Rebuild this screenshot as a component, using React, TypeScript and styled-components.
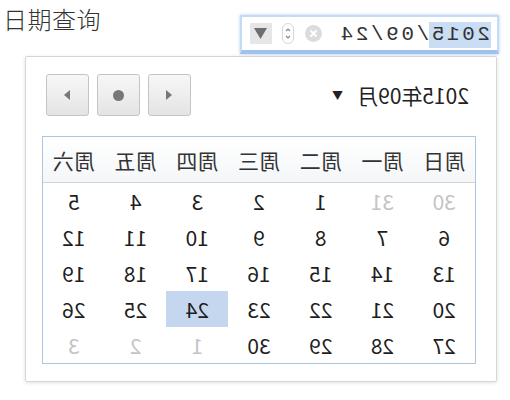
import styled, { createGlobalStyle } from "styled-components";

const GlobalStyle = createGlobalStyle`
  body {
    margin: 0;
    background: #ffffff;
    font-family: "Noto Sans CJK SC", "Noto Sans", sans-serif;
    color: #222;
  }
`

const Page = styled.main`
  width: 510px;
  height: 400px;
  box-sizing: border-box;
  padding: 3px 11px 0 3px;
  overflow: hidden;
`

const TopRow = styled.div`
  display: flex;
  flex-direction: row;
  justify-content: space-between;
  align-items: flex-start;
`

const Title = styled.h1`
  margin: 0;
  font-size: 24px;
  line-height: 32px;
  font-weight: 300;
  color: #333;
  letter-spacing: 0.5px;
`

// the whole control is shown mirrored in the picture
const DateInput = styled.div`
  margin-top: 12px;
  width: 259px;
  height: 39px;
  box-sizing: border-box;
  display: flex;
  flex-direction: row;
  align-items: center;
  padding-left: 6px;
  padding-right: 8px;
  background: #fff;
  border: 2px solid #c4dbf4;
  border-bottom: 4px solid #9fc2ea;
  box-shadow: 0 0 3px rgba(120, 170, 230, 0.6);
  transform: scaleX(-1);
`

const DateText = styled.div`
  font-family: "Liberation Mono", "DejaVu Sans Mono", monospace;
  font-size: 21px;
  letter-spacing: 2.6px;
  color: #333;
  display: flex;
  align-items: center;
  height: 26px;
  margin-top: 2px;
`

const Selected = styled.span`
  background: #c9ddf4;
  height: 26px;
  line-height: 26px;
  padding-left: 1px;
`

const Spacer = styled.div`
  flex: 1;
`

const IconBox = styled.span<{ $gap?: number }>`
  display: flex;
  align-items: center;
  margin-left: ${(p) => p.$gap ?? 0}px;
`

const DropButton = styled.span`
  margin-left: 10px;
  width: 22px;
  height: 21px;
  background: #e6e6e6;
  display: flex;
  align-items: center;
  justify-content: center;
`

const Popup = styled.section`
  margin-top: 2px;
  margin-left: 22px;
  width: 472px;
  height: 326px;
  box-sizing: border-box;
  padding: 17px 20px 0 20px;
  border: 1px solid #d6d6d6;
  border-radius: 2px;
  box-shadow: 0 1px 4px rgba(0, 0, 0, 0.12);
  transform: scaleX(-1);
`

const PopupHeader = styled.div`
  display: flex;
  flex-direction: row;
  justify-content: space-between;
  align-items: center;
  height: 42px;
  margin-bottom: 20px;
`

const MonthLabel = styled.div`
  padding-left: 7px;
  font-size: 21px;
  color: #222;
  display: flex;
  align-items: center;
  gap: 14px;
`

const Caret = styled.span`
  font-size: 11px;
  color: #222;
`

const NavGroup = styled.div`
  display: flex;
  gap: 8px;
`

const NavButton = styled.button`
  width: 43px;
  height: 42px;
  box-sizing: border-box;
  border: 1px solid #c4c4c4;
  border-radius: 3px;
  background: linear-gradient(#f7f7f7, #e4e4e4);
  display: flex;
  align-items: center;
  justify-content: center;
  padding: 0;
`

const Dot = styled.span`
  width: 11px;
  height: 11px;
  border-radius: 50%;
  background: #777;
`

const Table = styled.div`
  width: 432px;
  border: 1px solid #a9c7de;
  display: grid;
  grid-template-columns: repeat(7, 1fr);
  grid-template-rows: 46px repeat(5, 36px);
`

const HeadCell = styled.div`
  display: flex;
  align-items: center;
  justify-content: center;
  font-size: 21px;
  color: #333;
  background: linear-gradient(#ffffff, #f4f6f8);
  border-bottom: 1px solid #cfd4d8;
`

const DayCell = styled.div<{ $muted?: boolean; $active?: boolean }>`
  display: flex;
  align-items: center;
  justify-content: center;
  font-size: 21px;
  color: ${(p) => (p.$muted ? "#c4c4c4" : "#1e1e1e")};
  background: ${(p) => (p.$active ? "#c5d7ef" : "transparent")};
`

const weekdays = ["周日", "周一", "周二", "周三", "周四", "周五", "周六"];

const days: { d: number; muted?: boolean }[] = [
  { d: 30, muted: true },
  { d: 31, muted: true },
  ...Array.from({ length: 30 }, (_, i) => ({ d: i + 1 })),
  { d: 1, muted: true },
  { d: 2, muted: true },
  { d: 3, muted: true },
];

const Triangle = ({ dir }: { dir: "left" | "right" }) => (
  <svg width="8" height="10" viewBox="0 0 8 10">
    {dir === "left" ? (
      <path d="M7 0 L1 5 L7 10 Z" fill="#777" />
    ) : (
      <path d="M1 0 L7 5 L1 10 Z" fill="#777" />
    )}
  </svg>
);

const ClearIcon = () => (
  <svg width="17" height="17" viewBox="0 0 17 17">
    <circle cx="8.5" cy="8.5" r="8.5" fill="#dcdcdc" />
    <path d="M5.5 5.5 L11.5 11.5 M11.5 5.5 L5.5 11.5" stroke="#fff" strokeWidth="2" />
  </svg>
);

const SpinIcon = () => (
  <svg width="12" height="21" viewBox="0 0 12 21">
    <rect x="0.5" y="0.5" width="11" height="20" rx="5.5" fill="#fff" stroke="#d6d6d6" />
    <path d="M4 8 L6 6 L8 8 M4 13 L6 15 L8 13" stroke="#888" strokeWidth="1.2" fill="none" />
  </svg>
);

const DropIcon = () => (
  <svg width="13" height="11" viewBox="0 0 13 11">
    <path d="M0 0 L13 0 L6.5 11 Z" fill="#6e6e6e" />
  </svg>
);

const App = () => {
  return (
    <Page>
      <GlobalStyle />
      <TopRow>
        <Title>日期查询</Title>
        <DateInput>
          <DateText>
            <Selected>2015</Selected>/09/24
          </DateText>
          <Spacer />
          <IconBox>
            <ClearIcon />
          </IconBox>
          <IconBox $gap={11}>
            <SpinIcon />
          </IconBox>
          <DropButton>
            <DropIcon />
          </DropButton>
        </DateInput>
      </TopRow>
      <Popup>
        <PopupHeader>
          <MonthLabel>
            2015年09月
            <Caret>▼</Caret>
          </MonthLabel>
          <NavGroup>
            <NavButton>
              <Triangle dir="left" />
            </NavButton>
            <NavButton>
              <Dot />
            </NavButton>
            <NavButton>
              <Triangle dir="right" />
            </NavButton>
          </NavGroup>
        </PopupHeader>
        <Table>
          {weekdays.map((w) => (
            <HeadCell key={w}>{w}</HeadCell>
          ))}
          {days.map((day, i) => (
            <DayCell key={i} $muted={day.muted} $active={!day.muted && day.d === 24}>
              {day.d}
            </DayCell>
          ))}
        </Table>
      </Popup>
    </Page>
  );
};
export default App;
